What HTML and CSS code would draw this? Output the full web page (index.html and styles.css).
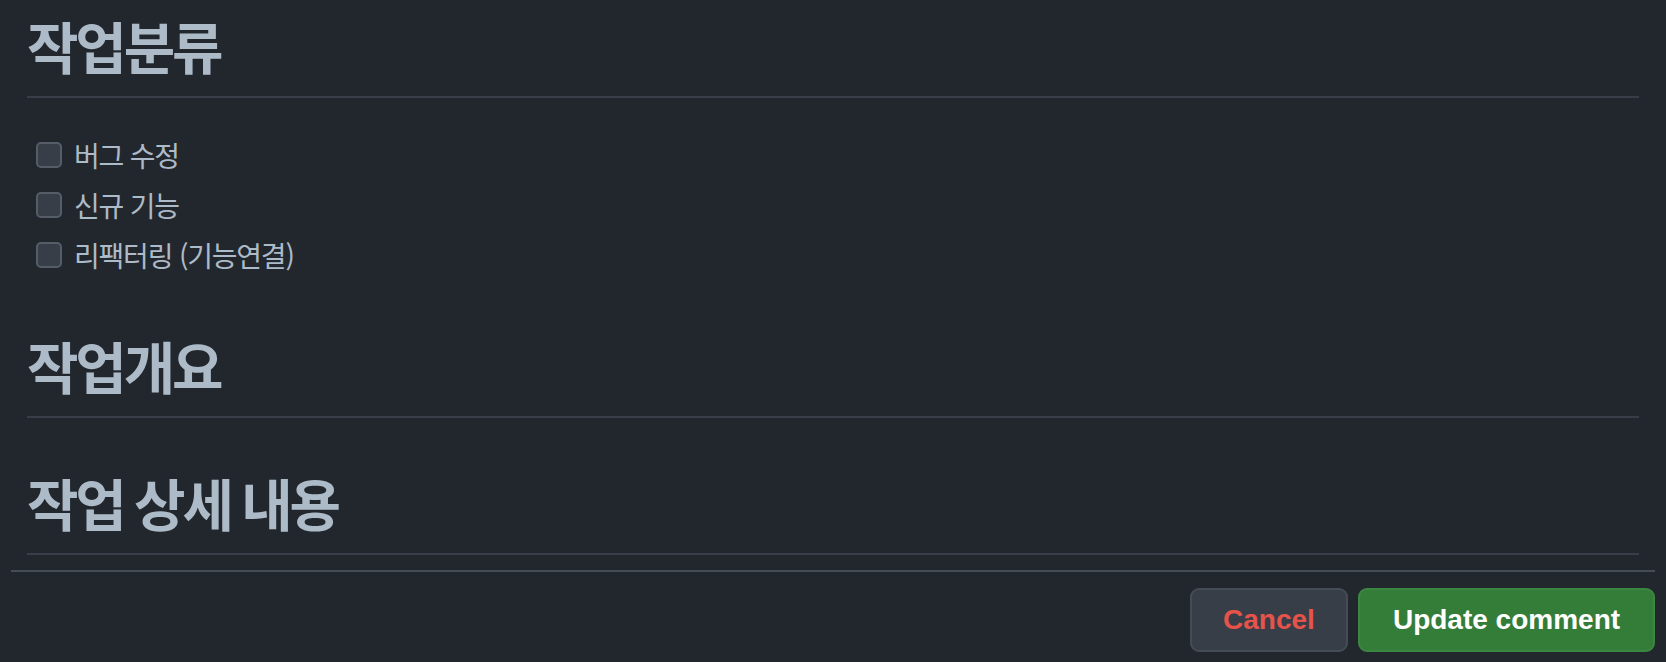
FILE: index.html
```html
<!DOCTYPE html>
<html lang="ko">

<head>
    <meta charset="UTF-8">
    <meta name="viewport" content="width=device-width, initial-scale=1">
    <title>Edit comment</title>
    <link rel="stylesheet" href="styles.css">
</head>

<body>

    <form class="comment_form">
        <div class="markdown_body">
            <h1>작업분류</h1>
            <ul class="task_list">
                <li><input type="checkbox" class="task_check"> 버그 수정</li>
                <li><input type="checkbox" class="task_check"> 신규 기능</li>
                <li><input type="checkbox" class="task_check"> 리팩터링 (기능연결)</li>
            </ul>

            <h1>작업개요</h1>

            <h1>작업 상세 내용</h1>
        </div>

        <div class="form_actions">
            <button type="button" class="btn btn_cancel">Cancel</button>
            <button type="submit" class="btn btn_primary">Update comment</button>
        </div>
    </form>

</body>

</html>
```

FILE: styles.css
```css
*{
    padding: 0px;
    margin: 0px;
    box-sizing: border-box;
}

body{
    background-color: #22272e;
    color: #adbac7;
    font-family: "Noto Sans CJK KR", "Liberation Sans", sans-serif;
    width: 100vw;
    height: 100vh;
    overflow: hidden;
}

.comment_form{
    margin: 0px 11px;
}

.markdown_body{
    padding: 10px 16px 0px 16px;
}

h1{
    font-size: 56px;
    font-weight: 700;
    line-height: 70px;
    letter-spacing: -3.2px;
    word-spacing: -2px;
    padding-bottom: 16px;
    border-bottom: 2px solid #373e47;
}

.task_list{
    list-style: none;
    margin: 32px 0px 50px 0px;
}

.task_list li{
    display: flex;
    align-items: center;
    height: 50px;
    font-size: 28px;
    letter-spacing: -1.2px;
    padding-left: 9px;
}

.task_check{
    appearance: none;
    width: 26px;
    height: 26px;
    margin-right: 12px;
    border: 2px solid #545d68;
    border-radius: 5px;
    background-color: #373e47;
}

h1 + h1{
    margin-top: 49px;
}

.form_actions{
    margin-top: 15px;
    padding-top: 16px;
    border-top: 2px solid #444c56;
    display: flex;
    justify-content: flex-end;
    gap: 10px;
}

.btn{
    height: 64px;
    font-family: "Liberation Sans", Arial, sans-serif;
    font-size: 28px;
    font-weight: 700;
    border-radius: 9px;
    border: 2px solid #444c56;
    padding: 0px 24px;
}

.btn_cancel{
    width: 158px;
    background-color: #373e47;
    color: #e5534b;
}

.btn_primary{
    width: 297px;
    background-color: #347d39;
    border-color: #3b8640;
    color: #ffffff;
}
```
